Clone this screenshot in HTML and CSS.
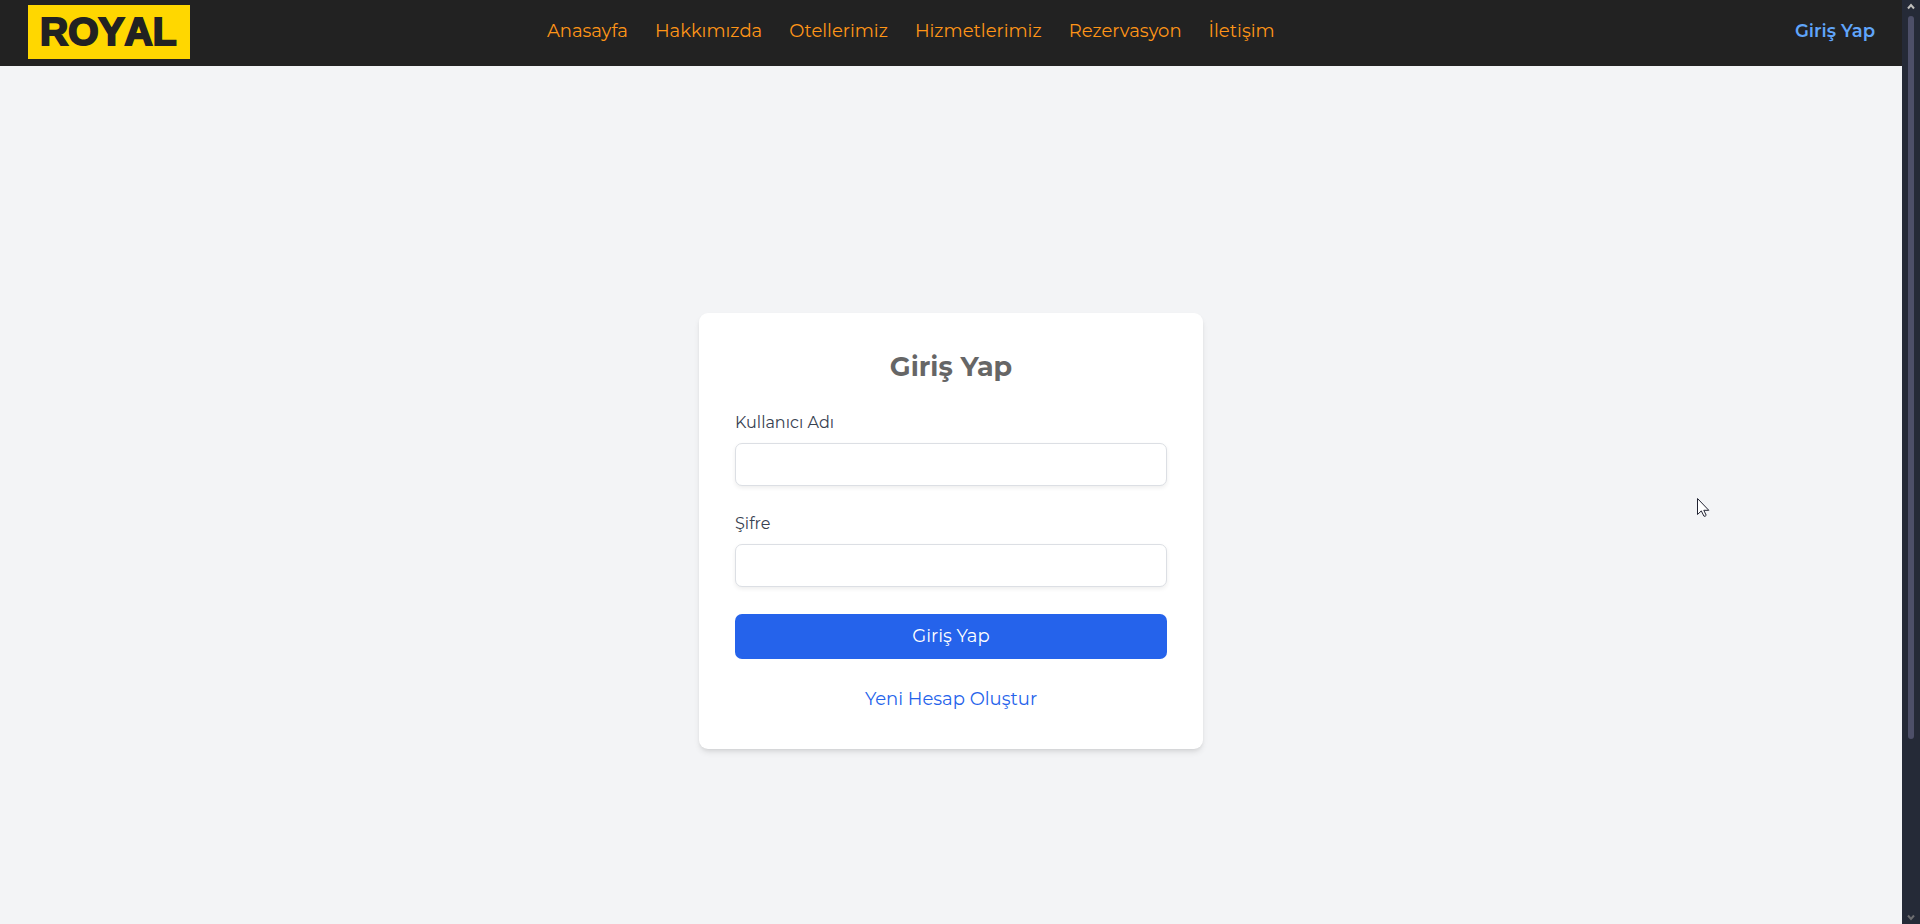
FILE: index.html
```html
<!DOCTYPE html>
<html lang="tr">
<head>
<meta charset="utf-8">
<meta name="viewport" content="width=device-width, initial-scale=1">
<title>Royal</title>
<link rel="stylesheet" href="styles.css">
</head>
<body>
<div class="page">
  <header class="navbar">
    <a class="logo" href="#">ROYAL</a>
    <nav class="menu">
      <a href="#">Anasayfa</a>
      <a href="#">Hakkımızda</a>
      <a href="#">Otellerimiz</a>
      <a href="#">Hizmetlerimiz</a>
      <a href="#">Rezervasyon</a>
      <a href="#">İletişim</a>
    </nav>
    <div class="account"><a href="#">Giriş Yap</a></div>
  </header>
  <main class="main">
    <form class="card">
      <h1 class="title">Giriş Yap</h1>
      <div class="field">
        <label for="username">Kullanıcı Adı</label>
        <input id="username" type="text">
      </div>
      <div class="field">
        <label for="password">Şifre</label>
        <input id="password" type="password">
      </div>
      <button class="submit" type="submit">Giriş Yap</button>
      <a class="register" href="#">Yeni Hesap Oluştur</a>
    </form>
  </main>
</div>
<div class="scrollbar" aria-hidden="true">
  <svg class="arrow arrow-up" width="8" height="7" viewBox="0 0 8 7"><path d="M1 5.5 4 2l3 3.5"/></svg>
  <div class="track"><div class="thumb"></div></div>
  <svg class="arrow arrow-down" width="8" height="7" viewBox="0 0 8 7"><path d="M1 1.5 4 5l3-3.5"/></svg>
</div>
<svg class="pointer" width="13" height="20" viewBox="0 0 13 20" aria-hidden="true"><path d="M.5.5v16l3.8-3.6 2.6 5.2q1.200 .8 2.300-.8L6.800 12.300h5Z"/></svg>
</body>
</html>
```
FILE: styles.css
```css
* { box-sizing: border-box; }

body {
  display: flex;
  height: 100vh;
  margin: 0;
  overflow: hidden;
  background: #f3f4f6;
  font-family: Montserrat, Inter, "Noto Sans", sans-serif;
  font-size: 18px;
  line-height: 27px;
}

a { text-decoration: none; }

.page {
  flex: 1;
  min-width: 0;
  overflow: hidden;
}

.navbar {
  display: flex;
  align-items: center;
  justify-content: space-between;
  padding: 5px 27px 7px 28px;
  background: #222;
}

.logo {
  padding: 0 13px 0 12px;
  background: #ffd700;
  color: #222;
  font: bold 39px/54px "Liberation Sans", Arial, sans-serif;
  font-kerning: none;
  -webkit-text-stroke: 2px #222;
}

.menu {
  display: flex;
  gap: 27px;
  padding-bottom: 1px;
}

.menu a { color: #ff9517; }

.account {
  min-width: 243px;
  padding-bottom: 1px;
  text-align: right;
}

.account a {
  color: #60a5fa;
  font-weight: 600;
}

.main {
  display: flex;
  align-items: center;
  justify-content: center;
  min-height: 100vh;
  padding-top: 6px;
}

.card {
  display: flex;
  flex-direction: column;
  gap: 27px;
  width: 100%;
  max-width: 504px;
  padding: 36px;
  border-radius: 9px;
  background: #fff;
  box-shadow: 0 4px 6px -1px rgba(0, 0, 0, .1), 0 2px 4px -2px rgba(0, 0, 0, .1);
}

.title {
  margin: 0;
  color: #666;
  font-size: 27px;
  font-weight: 700;
  line-height: 36px;
  text-align: center;
}

.field {
  display: flex;
  flex-direction: column;
  gap: 9px;
}

.field label {
  color: #374151;
  font-size: 16px;
  line-height: 22px;
}

.field input {
  width: 100%;
  height: 43px;
  padding: 9px 14px;
  border: 1px solid #dcdfe4;
  border-radius: 7px;
  background: #fff;
  box-shadow: 0 2px 4px rgba(0, 0, 0, .07);
  font: inherit;
}

.submit {
  padding: 9px 18px;
  border: 0;
  border-radius: 7px;
  background: #2563eb;
  color: #fff;
  font: inherit;
}

.register {
  color: #2563eb;
  text-align: center;
}

.scrollbar {
  display: flex;
  flex-direction: column;
  align-items: center;
  width: 18px;
  padding: 3px 0;
  background: #252a37;
}

.arrow {
  fill: none;
  stroke: #c0bfbd;
  stroke-width: 2;
}

.arrow-down { stroke: #6d6d70; }

.track {
  flex: 1;
  padding: 6px 0;
}

.thumb {
  width: 6px;
  height: 81%;
  border-radius: 3px;
  background: #4d4f68;
}

.pointer {
  position: absolute;
  top: 498px;
  left: 1697px;
  fill: #fff;
  stroke: #222433;
}
```
